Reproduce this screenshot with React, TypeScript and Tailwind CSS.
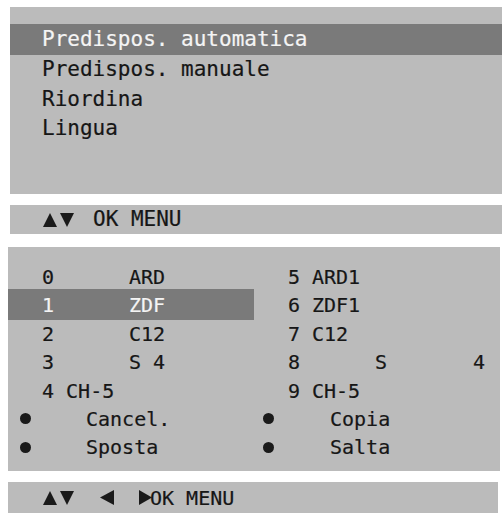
import React from "react";

const mono = { fontFamily: '"DejaVu Sans Mono", "Liberation Mono", monospace' };

function Up({ className = "" }: { className?: string }) {
  return (
    <svg width="14" height="14" viewBox="0 0 14 14" className={className}>
      <polygon points="7,0 14,14 0,14" fill="#1a1a1a" />
    </svg>
  );
}
function Down({ className = "" }: { className?: string }) {
  return (
    <svg width="14" height="14" viewBox="0 0 14 14" className={className}>
      <polygon points="0,0 14,0 7,14" fill="#1a1a1a" />
    </svg>
  );
}
function Left({ className = "" }: { className?: string }) {
  return (
    <svg width="14" height="15" viewBox="0 0 14 15" className={className}>
      <polygon points="14,0 14,15 0,7.5" fill="#1a1a1a" />
    </svg>
  );
}
function Right({ className = "" }: { className?: string }) {
  return (
    <svg width="13" height="15" viewBox="0 0 13 15" className={className}>
      <polygon points="0,0 13,7.5 0,15" fill="#1a1a1a" />
    </svg>
  );
}

function Dot() {
  return <span className="block w-[11px] h-[11px] rounded-full bg-[#1a1a1a]" />;
}

export default function App() {
  return (
    <div className="w-[503px] h-[514px] bg-white overflow-hidden pt-[7px] text-[#161616] [-webkit-text-stroke:0.2px_currentColor]" style={mono}>
      {/* Panel 1 */}
      <div className="ml-[10px] mr-[1px] h-[187px] bg-[#bbbbbb] pt-[17px] text-[21px] leading-none">
        <div className="h-[31px] bg-[#7a7a7a] text-[#f4f4f4] flex items-center pl-[32px]">Predispos. automatica</div>
        <div className="h-[29.5px] flex items-center pl-[32px]">Predispos. manuale</div>
        <div className="h-[29.5px] flex items-center pl-[32px]">Riordina</div>
        <div className="h-[29.5px] flex items-center pl-[32px]">Lingua</div>
      </div>

      {/* Bar 1 */}
      <div className="mt-[11px] ml-[10px] mr-[1px] h-[29px] bg-[#bbbbbb] flex items-center pl-[33px] text-[21px] leading-none">
        <Up />
        <Down className="ml-[3px]" />
        <span className="ml-[19px]">OK MENU</span>
      </div>

      {/* Panel 3 */}
      <div className="mt-[13px] ml-[8px] mr-[3px] h-[224px] bg-[#bbbbbb] pt-[18px] text-[20px] leading-none">
        <div className="h-[24px] flex items-center">
          <div className="w-[280px] flex pl-[34px]">
            <span className="w-[87px]">0</span>
            <span>ARD</span>
          </div>
          <span className="w-[24px]">5</span>
          <span>ARD1</span>
        </div>
        <div className="h-[31px] flex items-stretch">
          <div className="w-[280px] flex">
            <div className="w-[246px] bg-[#7a7a7a] text-[#f4f4f4] flex items-center pl-[34px]">
              <span className="w-[87px]">1</span>
              <span>ZDF</span>
            </div>
          </div>
          <div className="flex items-center">
            <span className="w-[24px]">6</span>
            <span>ZDF1</span>
          </div>
        </div>
        <div className="h-[28px] flex items-center">
          <div className="w-[280px] flex pl-[34px]">
            <span className="w-[87px]">2</span>
            <span>C12</span>
          </div>
          <span className="w-[24px]">7</span>
          <span>C12</span>
        </div>
        <div className="h-[28px] flex items-center">
          <div className="w-[280px] flex pl-[34px]">
            <span className="w-[87px]">3</span>
            <span>S 4</span>
          </div>
          <span className="w-[87px]">8</span>
          <span className="w-[98px]">S</span>
          <span>4</span>
        </div>
        <div className="h-[29px] flex items-center">
          <div className="w-[280px] flex pl-[34px]">
            <span>4 CH-5</span>
          </div>
          <span className="w-[24px]">9</span>
          <span>CH-5</span>
        </div>
        <div className="h-[27px] flex items-center">
          <div className="w-[255px] flex items-center pl-[12px]">
            <Dot />
            <span className="ml-[55px]">Cancel.</span>
          </div>
          <Dot />
          <span className="ml-[56px]">Copia</span>
        </div>
        <div className="h-[30px] flex items-center">
          <div className="w-[255px] flex items-center pl-[12px]">
            <Dot />
            <span className="ml-[55px]">Sposta</span>
          </div>
          <Dot />
          <span className="ml-[56px]">Salta</span>
        </div>
      </div>

      {/* Bar 2 */}
      <div className="mt-[11px] ml-[8px] mr-[5px] h-[31px] bg-[#bbbbbb] flex items-center pl-[35px] text-[20px] leading-none">
        <Up />
        <Down className="ml-[3px]" />
        <Left className="ml-[26px]" />
        <Right className="ml-[25px]" />
        <span className="ml-[-2px]">OK MENU</span>
      </div>
    </div>
  );
}
